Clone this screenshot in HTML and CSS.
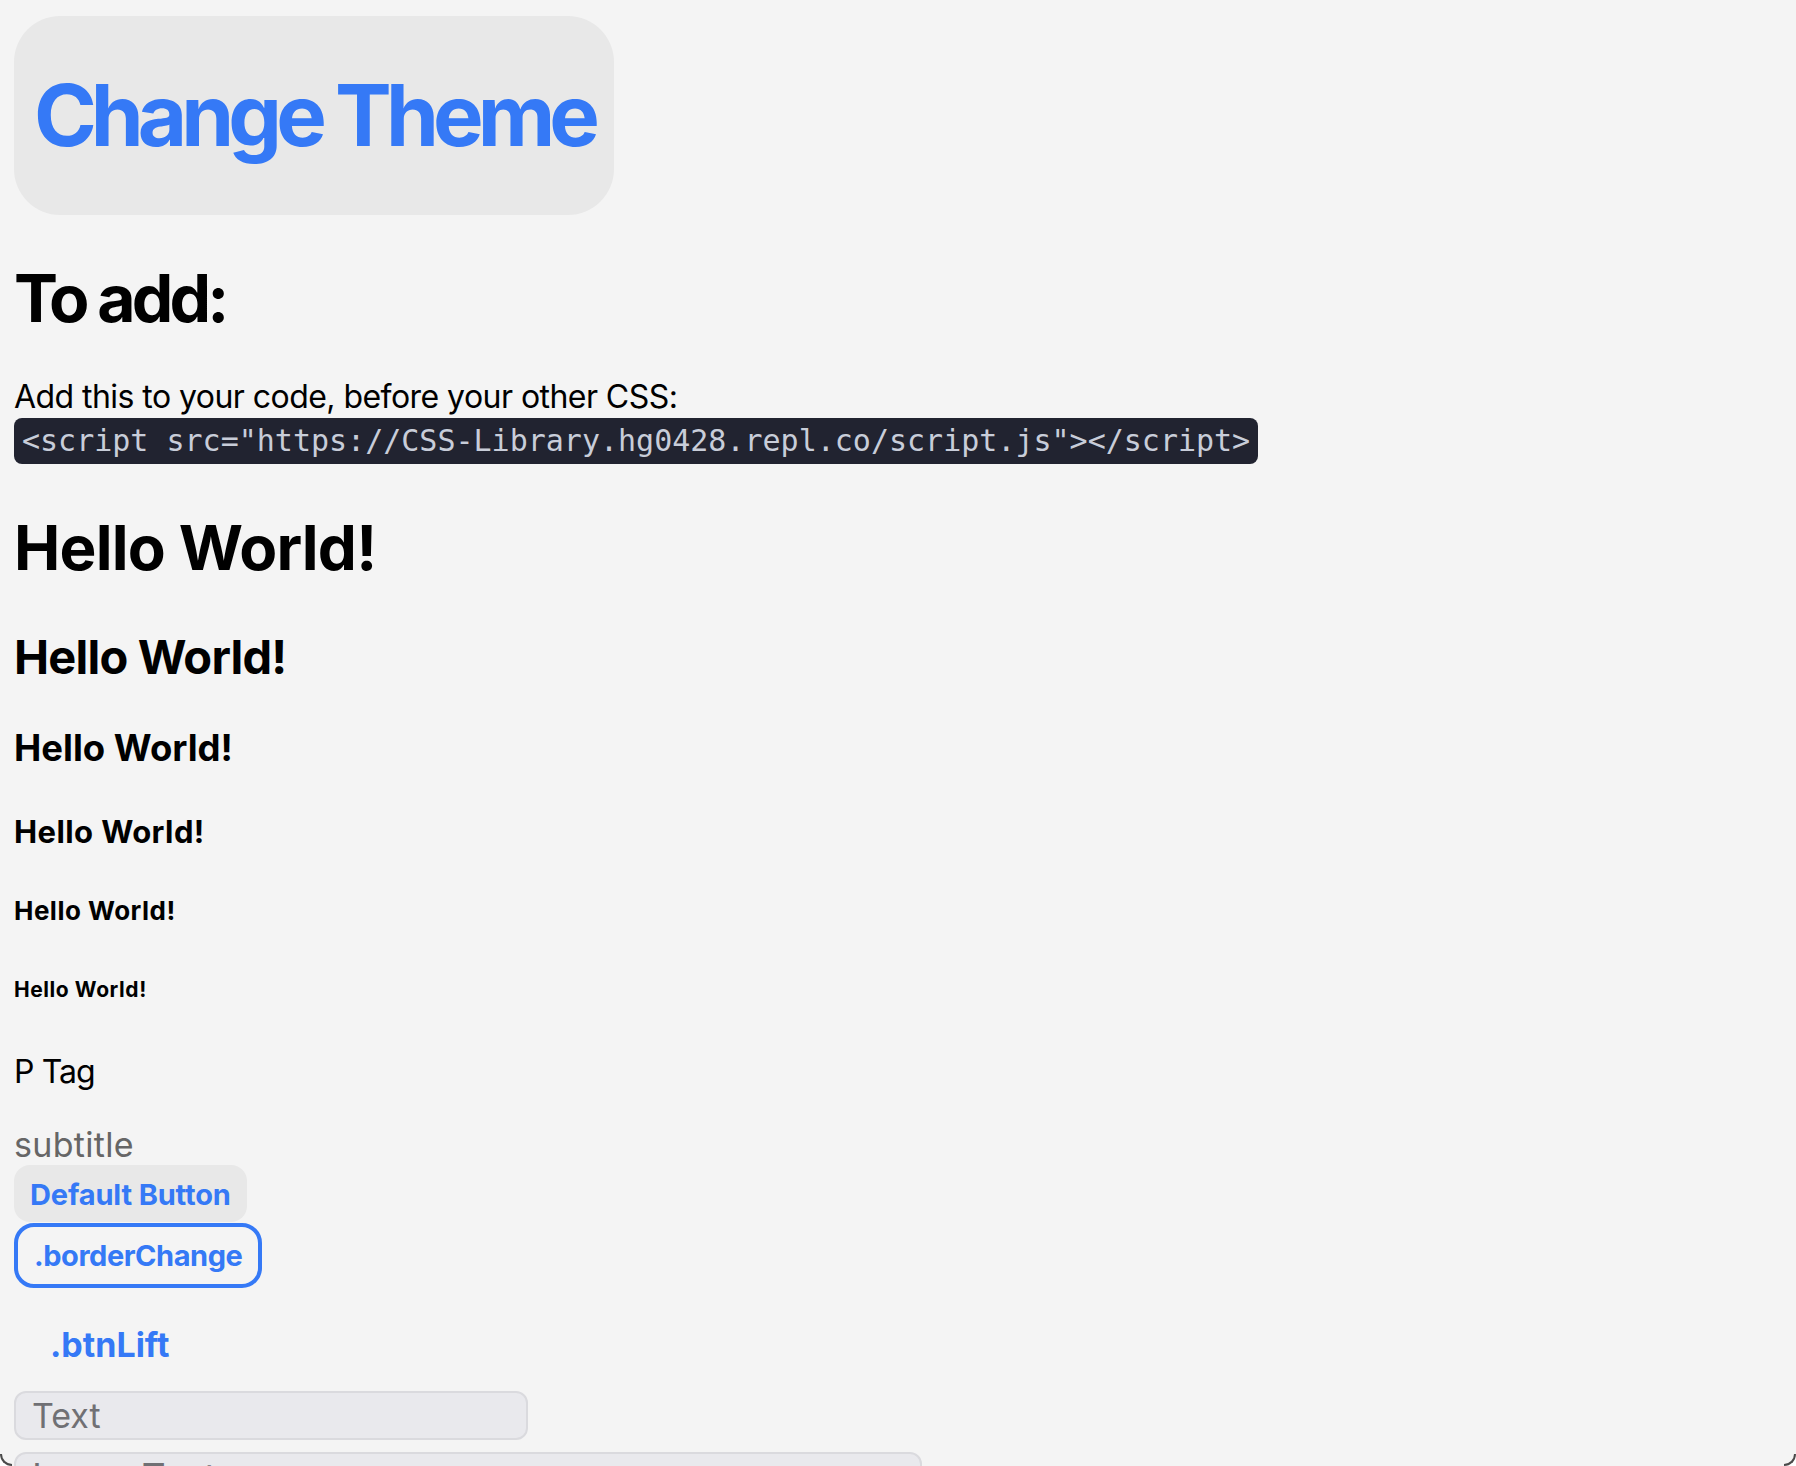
FILE: index.html
```html
<!DOCTYPE html>
<html lang="en">
<head>
<meta charset="utf-8">
<title>CSS Library</title>
<link rel="stylesheet" href="styles.css">
</head>
<body>
<main class="page">
  <button class="theme-btn" type="button">Change Theme</button>
  <h1 class="to-add">To add:</h1>
  <p class="intro">Add this to your code, before your other CSS:</p>
  <div class="snippet-row"><code class="snippet">&lt;script src="https://CSS-Library.hg0428.repl.co/script.js"&gt;&lt;/script&gt;</code></div>
  <h1 class="hx h1">Hello World!</h1>
  <h2 class="hx h2">Hello World!</h2>
  <h3 class="hx h3">Hello World!</h3>
  <h4 class="hx h4">Hello World!</h4>
  <h5 class="hx h5">Hello World!</h5>
  <h6 class="hx h6">Hello World!</h6>
  <p class="ptag">P Tag</p>
  <p class="subtitle">subtitle</p>
  <div class="btn-row"><button class="btn" type="button">Default Button</button></div>
  <div class="btn-row"><button class="btn border-change" type="button">.borderChange</button></div>
  <div class="btn-row"><button class="btn btn-lift" type="button">.btnLift</button></div>
  <div class="field-row"><input class="field field-small" type="text" placeholder="Text"></div>
  <div class="field-row"><input class="field field-large" type="text" placeholder="Large Text"></div>
</main>
<div class="corner corner-left" aria-hidden="true"></div>
<div class="corner corner-right" aria-hidden="true"></div>
</body>
</html>
```

FILE: styles.css
```css
* { box-sizing: border-box; }

html, body {
  margin: 0;
  padding: 0;
  background: #f4f4f4;
}

body {
  font-family: Inter, "Noto Sans", "Liberation Sans", sans-serif;
  color: #000;
}

.page {
  display: flex;
  flex-direction: column;
  align-items: flex-start;
  padding: 16px 14px 0 14px;
}

.theme-btn {
  width: 600px;
  height: 199px;
  margin: 0;
  padding: 0;
  border: none;
  border-radius: 46px;
  background: #e8e8e8;
  color: #3579f6;
  font-family: inherit;
  font-weight: 700;
  font-size: 85px;
  letter-spacing: -5.9px;
  line-height: 104px;
  white-space: nowrap;
  display: flex;
  align-items: center;
  justify-content: center;
}

.to-add {
  margin: 43px 0 0 0;
  font-size: 66px;
  line-height: 80px;
  font-weight: 700;
  letter-spacing: -3.9px;
}

.intro {
  margin: 39px 0 0 0;
  font-size: 32px;
  line-height: 40px;
  font-weight: 400;
  letter-spacing: -0.55px;
}

.snippet-row {
  margin-top: 1px;
  display: flex;
}

.snippet {
  display: block;
  height: 46px;
  padding: 0 8px;
  border-radius: 8px;
  background: #212330;
  color: #c8cdd9;
  font-family: "DejaVu Sans Mono", "Liberation Mono", monospace;
  font-size: 30px;
  line-height: 46px;
  white-space: pre;
}

.hx {
  margin: 0;
  font-weight: 700;
  white-space: nowrap;
}

.h1 { margin-top: 46px; font-size: 62px; line-height: 76px; letter-spacing: -0.8px; }
.h2 { margin-top: 41px; font-size: 47px; line-height: 60px; letter-spacing: -0.8px; }
.h3 { margin-top: 38px; font-size: 36.5px; line-height: 46px; letter-spacing: 0; }
.h4 { margin-top: 41px; font-size: 31px; line-height: 40px; letter-spacing: 0.4px; }
.h5 { margin-top: 42px; font-size: 26px; line-height: 34px; letter-spacing: 0.48px; }
.h6 { margin-top: 48px; font-size: 21px; line-height: 28px; letter-spacing: 0.57px; }

.ptag {
  margin: 48px 0 0 0;
  font-size: 32px;
  line-height: 40px;
  letter-spacing: -0.9px;
}

.subtitle {
  margin: 33px 0 0 0;
  font-size: 34px;
  line-height: 40px;
  color: #666666;
  letter-spacing: 0.3px;
}

.btn-row { display: flex; }

.btn {
  margin: 0;
  border: none;
  background: #e8e8e8;
  color: #3579f6;
  font-family: inherit;
  font-weight: 700;
  font-size: 29px;
  line-height: 37px;
  letter-spacing: -0.15px;
  padding: 11px 16px 9px 16px;
  border-radius: 16px;
  white-space: nowrap;
}

.border-change {
  margin-top: 1px;
  background: transparent;
  border: 4px solid #3579f6;
  border-radius: 20px;
  letter-spacing: -0.45px;
  padding: 10px 16px 10px 16px;
}

.btn-lift {
  margin-top: 35px;
  background: transparent;
  font-size: 34px;
  line-height: 44px;
  letter-spacing: 0;
  padding: 0 0 0 36px;
  border-radius: 0;
}

.field-row { display: flex; margin-top: 24px; }
.field-row + .field-row { margin-top: 12px; }

.field {
  margin: 0;
  height: 49px;
  border: 2px solid #dadade;
  border-radius: 12px;
  background: #e9e9ed;
  font-family: inherit;
  font-size: 34px;
  color: #333;
  padding: 0 16px;
  outline: none;
}

.field::placeholder { color: #707074; }

.field-small { width: 514px; }
.field-large { width: 908px; font-size: 37px; }

.corner {
  position: fixed;
  bottom: 0;
  width: 12px;
  height: 12px;
  pointer-events: none;
}

.corner-left {
  left: 0;
  border-left: 2px solid #4a4a4a;
  border-bottom: 2px solid #4a4a4a;
  border-bottom-left-radius: 12px;
  box-shadow: -6px 6px 0 6px #ffffff;
}

.corner-right {
  right: 0;
  border-right: 2px solid #4a4a4a;
  border-bottom: 2px solid #4a4a4a;
  border-bottom-right-radius: 12px;
  box-shadow: 6px 6px 0 6px #ffffff;
}
```
